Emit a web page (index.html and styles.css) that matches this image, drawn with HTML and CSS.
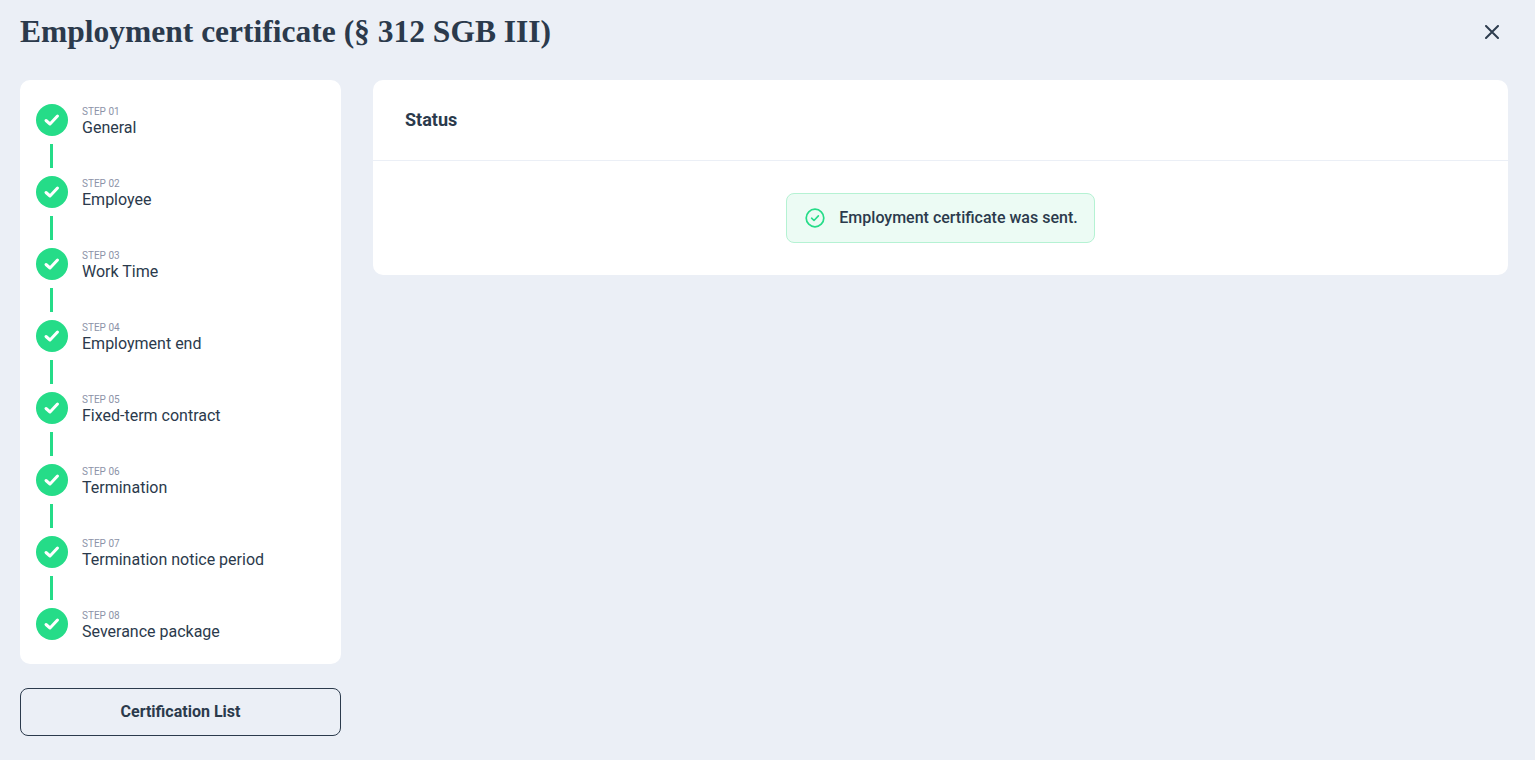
FILE: index.html
```html
<!DOCTYPE html>
<html lang="en">
<head>
<meta charset="utf-8">
<title>Employment certificate</title>
<link rel="stylesheet" href="styles.css">
</head>
<body>
<header class="top">
  <h1 class="title">Employment certificate (§ 312 SGB III)</h1>
  <button class="close" aria-label="Close">
    <svg width="14" height="14" viewBox="0 0 14 14"><path d="M1 1L13 13M13 1L1 13" stroke="#2e3d4f" stroke-width="2" stroke-linecap="round" fill="none"/></svg>
  </button>
</header>
<div class="layout">
  <aside class="side">
    <ol class="steps">
      <li class="step"><span class="dot"><svg width="18" height="18" viewBox="0 0 18 18"><path d="M3 9.5L7 13L14.5 5" class="tick"/></svg></span><div class="lbl"><small>STEP 01</small><span>General</span></div></li>
      <li class="bar"></li>
      <li class="step"><span class="dot"><svg width="18" height="18" viewBox="0 0 18 18"><path d="M3 9.5L7 13L14.5 5" class="tick"/></svg></span><div class="lbl"><small>STEP 02</small><span>Employee</span></div></li>
      <li class="bar"></li>
      <li class="step"><span class="dot"><svg width="18" height="18" viewBox="0 0 18 18"><path d="M3 9.5L7 13L14.5 5" class="tick"/></svg></span><div class="lbl"><small>STEP 03</small><span>Work Time</span></div></li>
      <li class="bar"></li>
      <li class="step"><span class="dot"><svg width="18" height="18" viewBox="0 0 18 18"><path d="M3 9.5L7 13L14.5 5" class="tick"/></svg></span><div class="lbl"><small>STEP 04</small><span>Employment end</span></div></li>
      <li class="bar"></li>
      <li class="step"><span class="dot"><svg width="18" height="18" viewBox="0 0 18 18"><path d="M3 9.5L7 13L14.5 5" class="tick"/></svg></span><div class="lbl"><small>STEP 05</small><span>Fixed-term contract</span></div></li>
      <li class="bar"></li>
      <li class="step"><span class="dot"><svg width="18" height="18" viewBox="0 0 18 18"><path d="M3 9.5L7 13L14.5 5" class="tick"/></svg></span><div class="lbl"><small>STEP 06</small><span>Termination</span></div></li>
      <li class="bar"></li>
      <li class="step"><span class="dot"><svg width="18" height="18" viewBox="0 0 18 18"><path d="M3 9.5L7 13L14.5 5" class="tick"/></svg></span><div class="lbl"><small>STEP 07</small><span>Termination notice period</span></div></li>
      <li class="bar"></li>
      <li class="step"><span class="dot"><svg width="18" height="18" viewBox="0 0 18 18"><path d="M3 9.5L7 13L14.5 5" class="tick"/></svg></span><div class="lbl"><small>STEP 08</small><span>Severance package</span></div></li>
    </ol>
    <button class="list-btn">Certification List</button>
  </aside>
  <main class="card">
    <div class="card-head">Status</div>
    <div class="card-body">
      <div class="notice">
        <svg width="20" height="20" viewBox="0 0 20 20"><circle cx="10" cy="10" r="8.8" fill="none" stroke="#25dc88" stroke-width="1.7"/><path d="M6.6 10.2L9 12.5L13.4 7.9" fill="none" stroke="#25dc88" stroke-width="1.6" stroke-linecap="round" stroke-linejoin="round"/></svg>
        <span class="notice-text">Employment certificate was sent.</span>
      </div>
    </div>
  </main>
</div>
</body>
</html>
```
FILE: styles.css
```css
* { box-sizing: border-box; }
html, body { height: 100%; }
body {
  margin: 0;
  height: 760px;
  overflow: hidden;
  background: #ebeff6;
  color: #2b3a4c;
  font-family: Roboto, "Liberation Sans", sans-serif;
}
.top {
  display: flex;
  align-items: center;
  justify-content: space-between;
  height: 80px;
  padding: 0 27px 16px 20px;
}
.title {
  margin: 0;
  font-family: "Liberation Serif", serif;
  font-size: 31.5px;
  font-weight: 700;
  line-height: 38px;
  color: #2b3a4c;
}
.close {
  display: flex;
  padding: 0;
  margin-right: 9px;
  border: 0;
  background: none;
}
.layout {
  display: flex;
  gap: 32px;
  padding: 0 27px 0 20px;
}
.side { width: 321px; flex: none; }
.steps {
  list-style: none;
  margin: 0;
  padding: 24px 16px 24px;
  height: 584px;
  background: #fff;
  border-radius: 10px;
}
.step {
  display: flex;
  align-items: center;
  gap: 14px;
  height: 32px;
}
.dot {
  display: flex;
  align-items: center;
  justify-content: center;
  width: 32px;
  height: 32px;
  flex: none;
  border-radius: 50%;
  background: #25dc88;
}
.tick {
  fill: none;
  stroke: #fff;
  stroke-width: 3;
  stroke-linecap: round;
  stroke-linejoin: round;
}
.bar {
  width: 3px;
  height: 24px;
  margin: 8px 0 8px 14px;
  background: #25dc88;
}
.lbl {
  display: flex;
  flex-direction: column;
  padding-top: 2px;
}
.lbl small {
  font-size: 10px;
  line-height: 12px;
  color: #8c93a8;
}
.lbl span {
  font-size: 16px;
  line-height: 19px;
  color: #2b3a4c;
}
.list-btn {
  display: block;
  width: 100%;
  height: 48px;
  margin-top: 24px;
  padding: 0 0 2px;
  border: 1px solid #2b3a4c;
  border-radius: 8px;
  background: transparent;
  color: #2b3a4c;
  font-family: inherit;
  font-size: 16px;
  font-weight: 700;
}
.card {
  flex: 1;
  height: 195px;
  background: #fff;
  border-radius: 10px;
}
.card-head {
  height: 81px;
  padding: 0 32px;
  border-bottom: 1px solid #ebeff6;
  font-size: 18px;
  font-weight: 700;
  line-height: 79px;
  color: #2b3a4c;
}
.card-body {
  display: flex;
  justify-content: center;
  padding-top: 32px;
}
.notice {
  display: flex;
  align-items: center;
  gap: 14px;
  height: 50px;
  padding: 0 16px 0 18px;
  background: #ecfbf4;
  border: 1px solid #b5f2d3;
  border-radius: 8px;
  font-size: 16px;
  font-weight: 500;
}
.notice-text { padding-bottom: 2px; }
```
